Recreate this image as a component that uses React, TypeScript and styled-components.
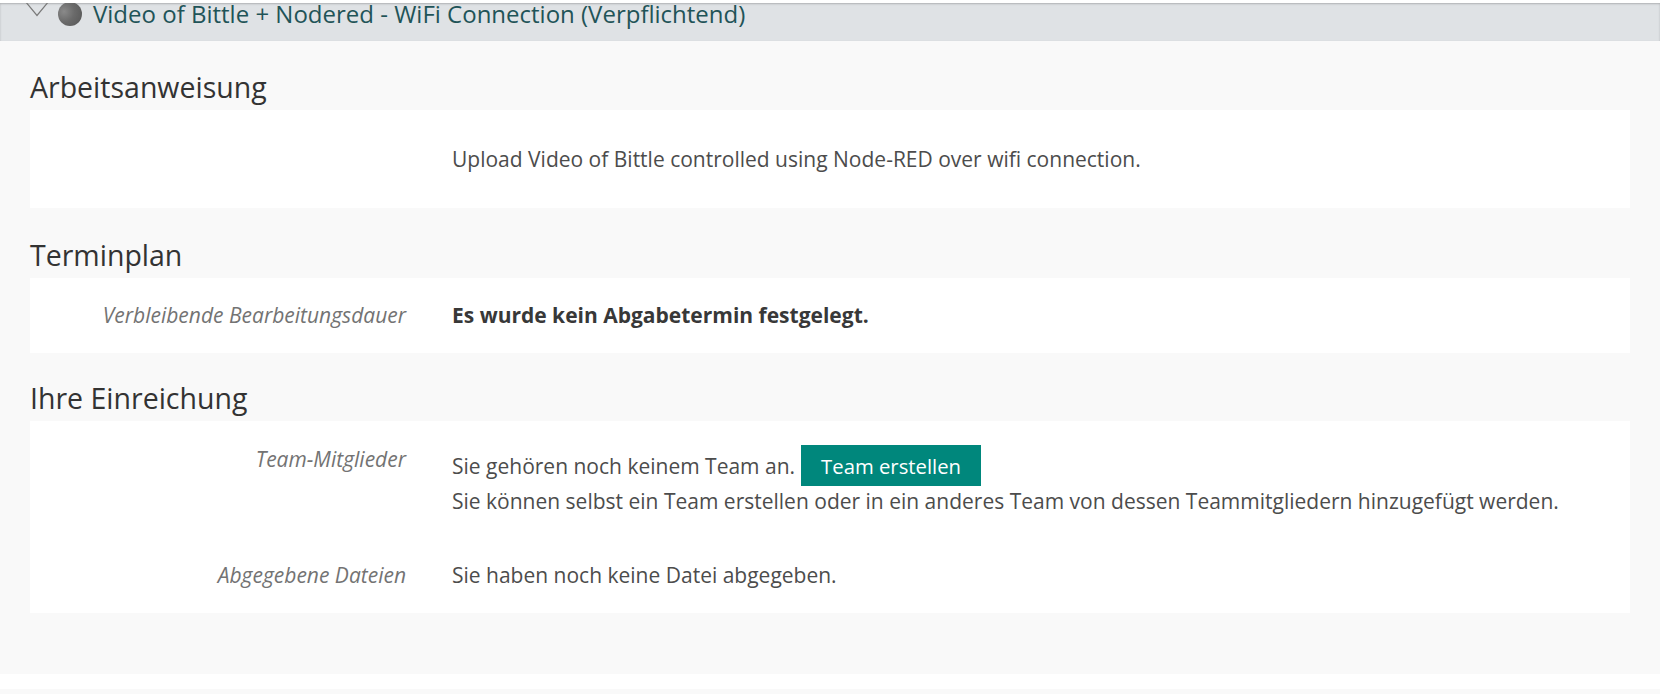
import React from "react";
import styled, { createGlobalStyle } from "styled-components";

const Global = createGlobalStyle`
  html, body { margin: 0; padding: 0; background: #ffffff; }
  body { font-family: "Open Sans", "Noto Sans", sans-serif; color: #4c4c4c; }
`;

const Page = styled.div`
  width: 1660px;
  padding-top: 3px;
`;

const AccordionHeader = styled.div`
  height: 38px;
  background: #dfe2e5;
  overflow: hidden;
  box-shadow: inset 0 1px 2px rgba(0, 0, 0, 0.22);
`;

const HeaderRow = styled.div`
  display: flex;
  align-items: center;
  height: 38px;
  margin-top: -8px;
  padding-left: 24px;
`;

const Chevron = styled.svg`
  width: 26px;
  height: 28px;
  flex: none;
`;

const Bullet = styled.span`
  width: 24px;
  height: 24px;
  border-radius: 50%;
  margin-left: 8px;
  flex: none;
  background: radial-gradient(circle at 25% 40%, #8a8a8a 0%, #6a6a6a 45%, #555 100%);
`;

const HeaderTitle = styled.span`
  margin-left: 11px;
  font-size: 24px;
  line-height: 30px;
  color: #1f5458;
  white-space: nowrap;
`;

const Panel = styled.div`
  display: flow-root;
  background: #f9f9f9;
  padding: 0 30px 61px;
`;

const SectionTitle = styled.h2<{ $mt: number }>`
  margin: ${(p) => p.$mt}px 0 5px;
  font-size: 28.5px;
  line-height: 36px;
  font-weight: 400;
  color: #333333;
`;

const Card = styled.div<{ $pt: number; $pb: number; $gap?: number }>`
  background: #ffffff;
  padding: ${(p) => p.$pt}px 0 ${(p) => p.$pb}px;
  display: flex;
  flex-direction: column;
  gap: ${(p) => p.$gap ?? 0}px;
`;

const Row = styled.div`
  display: grid;
  grid-template-columns: 376px 1fr;
  column-gap: 46px;
  font-size: 21px;
  line-height: 30px;
`;

const Label = styled.div<{ $offset?: number }>`
  text-align: right;
  font-style: italic;
  color: #737373;
  margin-top: ${(p) => p.$offset ?? 0}px;
`;

const Value = styled.div<{ $bold?: boolean }>`
  color: ${(p) => (p.$bold ? "#383838" : "#4c4c4c")};
  font-weight: ${(p) => (p.$bold ? 700 : 400)};
`;

const InlineLine = styled.div`
  display: flex;
  align-items: center;
  gap: 6px;
  height: 41px;
`;

const Button = styled.button`
  font-family: inherit;
  font-size: 20.3px;
  height: 41px;
  padding: 0 20px;
  border: none;
  background: #00877c;
  color: #ffffff;
  cursor: pointer;
`;

const NextItem = styled.div`
  margin-top: 15px;
  height: 10px;
  background: #f9f9f9;
`;

export default function App() {
  return (
    <Page>
      <Global />
      <AccordionHeader>
        <HeaderRow>
          <Chevron viewBox="0 0 26 28">
            <polyline points="1,1 13,15.5 25,1" fill="none" stroke="#7a7a7a" strokeWidth="1.2" />
          </Chevron>
          <Bullet />
          <HeaderTitle>Video of Bittle + Nodered - WiFi Connection (Verpflichtend)</HeaderTitle>
        </HeaderRow>
      </AccordionHeader>
      <Panel>
        <SectionTitle $mt={28}>Arbeitsanweisung</SectionTitle>
        <Card $pt={34} $pb={34}>
          <Row>
            <Label />
            <Value>Upload Video of Bittle controlled using Node-RED over wifi connection.</Value>
          </Row>
        </Card>

        <SectionTitle $mt={29}>Terminplan</SectionTitle>
        <Card $pt={22} $pb={23}>
          <Row>
            <Label>Verbleibende Bearbeitungsdauer</Label>
            <Value $bold>Es wurde kein Abgabetermin festgelegt.</Value>
          </Row>
        </Card>

        <SectionTitle $mt={27}>Ihre Einreichung</SectionTitle>
        <Card $pt={24} $pb={23} $gap={44}>
          <Row>
            <Label $offset={-1}>Team-Mitglieder</Label>
            <Value>
              <InlineLine>
                <span>Sie gehören noch keinem Team an.</span>
                <Button>Team erstellen</Button>
              </InlineLine>
              <div>
                Sie können selbst ein Team erstellen oder in ein anderes Team von dessen Teammitgliedern hinzugefügt werden.
              </div>
            </Value>
          </Row>
          <Row>
            <Label>Abgegebene Dateien</Label>
            <Value>Sie haben noch keine Datei abgegeben.</Value>
          </Row>
        </Card>
      </Panel>
      <NextItem />
    </Page>
  );
}
